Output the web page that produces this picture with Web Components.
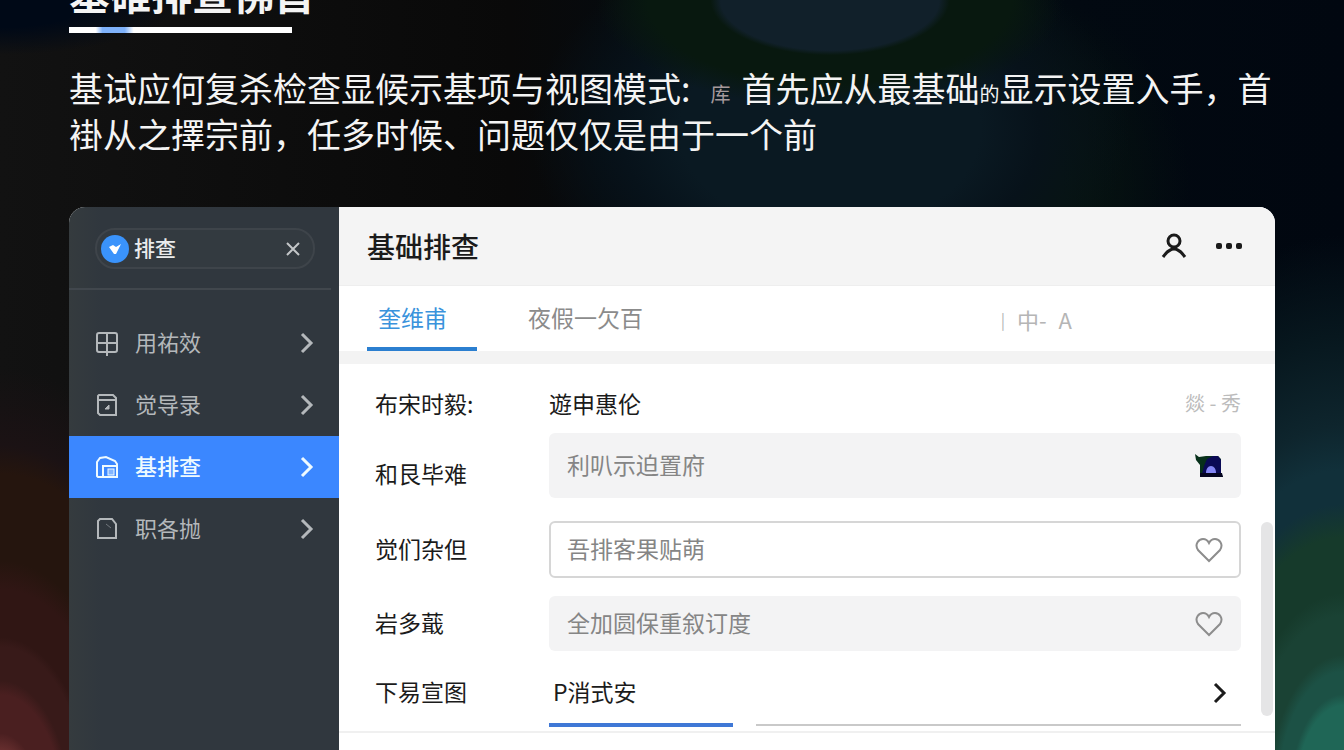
<!DOCTYPE html>
<html lang="zh-CN">
<head>
<meta charset="utf-8">
<meta name="viewport" content="width=device-width, initial-scale=1">
<title>基础排查</title>
<style>
html, body {
  margin: 0;
  height: 100%;
  overflow: hidden;
}

body {
  font-family: "Noto Sans CJK SC", "Noto Sans", sans-serif;
  background:
    radial-gradient(ellipse 260px 120px at 830px 0, #11202a 0 42%, #08180f 46% 70%, transparent 90%),
    radial-gradient(ellipse 300px 200px at 830px 130px, #0a1922 0 50%, #07121a 70%, transparent 100%),
    radial-gradient(ellipse 180px 200px at 1010px 190px, #071510 0 30%, transparent 100%),
    radial-gradient(ellipse 300px 560px at 100% 106%, #1f6656 0 16%, #1c5145 18% 22%, #1a4234 25% 32%, #163a2b 36% 46%, #11303a 52% 58%, #0e252d 66%, #07171e 82%, transparent 100%),
    radial-gradient(ellipse 260px 480px at 0 108%, #6a3030 0 12%, #4a1f20 16% 24%, #381a19 27% 34%, #301614 36% 46%, #25150e 52% 70%, #1b1214 76%, transparent 92%),
    radial-gradient(ellipse 180px 55px at 0 0, #000917 0 50%, transparent 100%),
    linear-gradient(90deg, #121212 0, #090909 38%, #030b13 55%, #020911 80%, #010710 100%);
}

/* The intro text is slotted, so its inline sizes are set here. */
guide-page small {
  font-size: 20px;
  line-height: 0;
}

guide-page .colon {
  font-size: 34px;
}

guide-page .faint {
  color: #a59a9c;
  margin: 0 11px 0 20px;
}
</style>
</head>
<body>
<guide-page>
  <span slot="title">基碓排查佛首</span>
  <span slot="intro">基试应何复杀检查显候示基项与视图模式<small class="colon">:</small><small class="faint">库</small>首先应从最基础<small>的</small>显示设置入手，首<br>褂从之擇宗前，任多时候、问题仅仅是由于一个前</span>
  <app-window>
    <side-nav slot="nav" query="排查">
      <nav-item icon="grid">用祐效</nav-item>
      <nav-item icon="calendar">觉导录</nav-item>
      <nav-item icon="home" active>基排查</nav-item>
      <nav-item icon="file">职各抛</nav-item>
    </side-nav>
    <window-header slot="header">基础排查</window-header>
    <tab-bar slot="tabs"></tab-bar>
    <form-row label="布宋时毅:" value="遊申惠伦" kind="plain" note="燚 - 秀"></form-row>
    <form-row label="和艮毕难" value="利叭示迫置府" kind="tall" icon="camera"></form-row>
    <form-row label="觉们杂但" value="吾排客果贴萌" kind="outline" icon="heart"></form-row>
    <form-row label="岩多蕺" value="全加圆保重叙订度" kind="filled" icon="heart"></form-row>
    <form-row label="下易宣图" value="P消式安" kind="line" icon="chevron"></form-row>
  </app-window>
</guide-page>

<script>
const icons = {
  grid: `<svg width="24" height="26" viewBox="0 0 24 26" fill="none" stroke="currentColor" stroke-width="2"><rect x="2" y="3" width="20" height="19" rx="2"/><path d="M12 3v23M2 13h20"/></svg>`,
  calendar: `<svg width="24" height="26" viewBox="0 0 24 26" fill="none" stroke="currentColor" stroke-width="2"><path d="M4 3h14l3 3v17H5l-2-2V4z"/><path d="M3 8h18"/><path d="M10 17h4v-4z" fill="currentColor" stroke-width="1"/></svg>`,
  home: `<svg width="24" height="26" viewBox="0 0 24 26" fill="none" stroke="currentColor" stroke-width="2"><path d="M2 22V8l3-4 6-1 9 4 2 3v13H3z"/><path d="M8 22V12h13"/><rect x="13" y="15" width="6" height="6" fill="currentColor" fill-opacity=".4" stroke-width="1"/></svg>`,
  file: `<svg width="24" height="26" viewBox="0 0 24 26" fill="none" stroke="currentColor" stroke-width="2"><path d="M5 3h12l4 5v14H3V5z"/><path d="M11 8l5 4" stroke-width="1" opacity=".5"/></svg>`,
  chevron: `<svg width="14" height="22" viewBox="0 0 14 22" fill="none" stroke="currentColor" stroke-width="3"><path d="M2 2l9 9-9 9"/></svg>`,
  close: `<svg width="16" height="16" viewBox="0 0 16 16" fill="none" stroke="currentColor" stroke-width="2"><path d="M2 2l12 12M14 2L2 14"/></svg>`,
  badge: `<svg width="28" height="28" viewBox="0 0 28 28"><circle cx="14" cy="14" r="14" fill="#3a93fb"/><path d="M8 12l4-2 3 2 5-3-5 10h-2z" fill="#fff"/></svg>`,
  user: `<svg width="26" height="26" viewBox="0 0 26 26" fill="none" stroke="currentColor" stroke-width="3"><circle cx="13" cy="8" r="6"/><path d="M2 24c3-4 6-8 11-8s8 4 11 8"/></svg>`,
  more: `<svg width="28" height="8" viewBox="0 0 28 8" fill="currentColor"><rect x="1" y="1" width="6" height="6" rx="2"/><rect x="11" y="1" width="6" height="6" rx="2"/><rect x="21" y="1" width="6" height="6" rx="2"/></svg>`,
  heart: `<svg width="28" height="26" viewBox="0 0 28 26" fill="none" stroke="currentColor" stroke-width="2"><path d="M14 24L3 13C-1 7 4 2 8 2c3 0 5 2 6 4 1-2 3-4 6-4 4 0 9 5 5 11z"/></svg>`,
  camera: `<svg width="28" height="24" viewBox="0 0 28 24"><path d="M0 0l4 3 7-1h12l3 3v14l2 4H5V11L1 6z" fill="#07301a"/><path d="M9 12l3-7 6-3h5l3 4v14H7z" fill="#0a0a55"/><path d="M5 19h22l1 4H5z" fill="#050520"/><path d="M11 19c0-4 2-7 5-7s5 3 5 7z" fill="#8386f5"/></svg>`,
};

class GuidePage extends HTMLElement {
  constructor() {
    super();
    this.attachShadow({ mode: 'open' }).innerHTML = `
<style>
:host {
  display: flex;
  flex-direction: column;
  box-sizing: border-box;
  height: 100vh;
  padding: 0 69px;
  overflow: hidden;
  color: #f4f4f4;
}
h1 {
  flex: none;
  margin: -32px 0 11px;
  font-size: 41px;
  line-height: 48px;
  font-weight: 700;
}
.rule {
  flex: none;
  width: 223px;
  height: 6px;
  background: linear-gradient(90deg, #fff 12%, #7fb2fb 15% 25%, #fff 29%);
}
p {
  flex: none;
  margin: 32px -8px 50px 0;
  font-size: 34px;
  line-height: 46px;
}
::slotted(app-window) {
  flex: 1;
  min-height: 0;
}
</style>
<h1><slot name="title"></slot></h1>
<div class="rule"></div>
<p><slot name="intro"></slot></p>
<slot></slot>`;
  }
}

class AppWindow extends HTMLElement {
  constructor() {
    super();
    this.attachShadow({ mode: 'open' }).innerHTML = `
<style>
:host {
  display: flex;
  overflow: hidden;
  border-radius: 16px 16px 0 0;
  background: #fff;
  color: #1b1b1b;
}
.main {
  flex: 1;
  min-width: 0;
  display: flex;
  flex-direction: column;
}
.body {
  display: flex;
  border-top: 13px solid #f3f3f3;
  border-bottom: 2px solid #f0f0f0;
}
form {
  flex: 1;
  min-width: 0;
  padding: 12px 20px 4px 36px;
}
.thumb {
  width: 12px;
  margin: 158px 2px 15px 0;
  border-radius: 6px;
  background: #e5e5e6;
}
</style>
<slot name="nav"></slot>
<div class="main">
  <slot name="header"></slot>
  <slot name="tabs"></slot>
  <div class="body">
    <form><slot></slot></form>
    <div class="thumb"></div>
  </div>
</div>`;
  }
}

class SideNav extends HTMLElement {
  constructor() {
    super();
    this.attachShadow({ mode: 'open' }).innerHTML = `
<style>
:host {
  display: block;
  flex: none;
  width: 25%;
  min-width: 240px;
  max-width: 270px;
  background: linear-gradient(90deg, #353b3e, #30373e 12%);
}
.search {
  display: flex;
  align-items: center;
  gap: 5px;
  box-sizing: border-box;
  height: 41px;
  margin: 21px 24px 19px 26px;
  padding: 0 12px 0 4px;
  border: 2px solid #3e444a;
  border-radius: 20px;
  background: #333a40;
  color: #e9ebec;
}
input {
  flex: 1;
  min-width: 0;
  padding: 0 0 4px;
  border: 0;
  background: none;
  color: inherit;
  font: 500 21px "Noto Sans CJK SC", sans-serif;
}
button {
  display: flex;
  padding: 0;
  border: 0;
  background: none;
  color: #c3c6c8;
}
hr {
  height: 2px;
  margin: 0 8px 22px 0;
  border: 0;
  background: #41474d;
}
</style>
<div class="search">${icons.badge}<input type="text" aria-label="搜索"><button type="button" aria-label="清除">${icons.close}</button></div>
<hr>
<nav><slot></slot></nav>`;
  }

  connectedCallback() {
    this.shadowRoot.querySelector('input').value = this.getAttribute('query');
  }
}

class NavItem extends HTMLElement {
  connectedCallback() {
    this.attachShadow({ mode: 'open' }).innerHTML = `
<style>
:host {
  display: block;
  color: #b4b8bb;
}
:host([active]) {
  background: #3b87ff;
  color: #eefaff;
  font-weight: 500;
}
a {
  display: flex;
  align-items: center;
  height: 62px;
  padding: 0 25px 0 26px;
  color: inherit;
  text-decoration: none;
  font-size: 22px;
}
span {
  flex: 1;
  margin-left: 16px;
  padding-bottom: 4px;
}
</style>
<a href="#">${icons[this.getAttribute('icon')]}<span><slot></slot></span>${icons.chevron}</a>`;
  }
}

class WindowHeader extends HTMLElement {
  constructor() {
    super();
    this.attachShadow({ mode: 'open' }).innerHTML = `
<style>
:host {
  display: flex;
  align-items: center;
  flex: none;
  gap: 28px;
  box-sizing: border-box;
  height: 79px;
  padding: 0 32px 0 28px;
  border-bottom: 1px solid #eee;
  background: #f4f4f4;
}
h2 {
  flex: 1;
  margin: 0;
  font-size: 28px;
  font-weight: 500;
}
button {
  display: flex;
  padding: 0;
  border: 0;
  background: none;
  color: #1b1b1b;
}
</style>
<h2><slot></slot></h2>
<button type="button" aria-label="用户">${icons.user}</button>
<button type="button" aria-label="更多">${icons.more}</button>`;
  }
}

class TabBar extends HTMLElement {
  constructor() {
    super();
    this.attachShadow({ mode: 'open' }).innerHTML = `
<style>
:host {
  display: flex;
  flex: none;
  height: 65px;
  padding: 0 203px 0 28px;
}
button {
  padding: 0 11px;
  border: 0;
  border-bottom: 4px solid transparent;
  background: none;
  color: #8b8b8b;
  font: 23px "Noto Sans CJK SC", sans-serif;
}
button.on {
  width: 110px;
  margin-right: 40px;
  padding-right: 30px;
  border-color: #2b7fd0;
  color: #3a93dc;
}
.tools {
  display: flex;
  align-items: center;
  gap: 12px;
  margin-left: auto;
  color: #b5b5b5;
  font-size: 22px;
}
.tools span:first-child {
  font-size: 16px;
}
</style>
<button type="button" class="on">奎维甫</button>
<button type="button">夜假一欠百</button>
<div class="tools"><span>|</span><span>中-</span><span>A</span></div>`;
  }
}

class FormRow extends HTMLElement {
  connectedCallback() {
    const kind = this.getAttribute('kind');
    const note = this.getAttribute('note');
    const icon = this.getAttribute('icon');
    this.attachShadow({ mode: 'open' }).innerHTML = `
<style>
:host {
  display: grid;
  grid-template-columns: 174px 1fr;
  align-items: center;
}
label {
  padding-bottom: 4px;
  font-size: 23px;
  line-height: 46px;
}
.field {
  display: flex;
  align-items: center;
  box-sizing: border-box;
  height: 55px;
  padding: 0 18px;
  border-radius: 6px;
  background: #f3f3f4;
  color: #8d8d8d;
}
input {
  flex: 1;
  min-width: 0;
  padding: 0 0 4px;
  border: 0;
  background: none;
  color: #858585;
  font: 23px "Noto Sans CJK SC", sans-serif;
}
:host([kind="plain"]) .field,
:host([kind="line"]) .field {
  padding: 0;
  background: none;
  color: #1b1b1b;
}
:host([kind="plain"]) input,
:host([kind="line"]) input {
  color: #1b1b1b;
}
:host([kind="plain"]) .field { height: 57px; }
:host([kind="tall"]) .field { height: 65px; }
:host([kind="tall"]) label { padding: 15px 0 0; }
:host([kind="outline"]) { margin: 23px 0 18px; }
:host([kind="outline"]) .field {
  height: 57px;
  padding: 0 16px;
  border: 2px solid #d6d6d6;
  background: #fff;
}
:host([kind="line"]) { padding-top: 14px; }
:host([kind="line"]) .field { padding: 0 14px 0 4px; }
.note {
  padding-bottom: 4px;
  color: #bcbcbc;
  font-size: 20px;
}
.track {
  grid-column: 2;
  display: flex;
  align-items: center;
  gap: 23px;
  height: 4px;
  margin-top: 3px;
}
.track i { flex: 1; height: 2px; background: #c9c9c9; }
.track i:first-child { flex: 0 0 184px; height: 4px; background: #3f78d6; }
</style>
<label for="f">${this.getAttribute('label')}</label>
<div class="field"><input id="f" type="text">${note ? `<span class="note">${note}</span>` : ''}${icon ? icons[icon] : ''}</div>
${kind === 'line' ? '<div class="track"><i></i><i></i></div>' : ''}`;
    this.shadowRoot.getElementById('f').value = this.getAttribute('value');
  }
}

customElements.define('guide-page', GuidePage);
customElements.define('app-window', AppWindow);
customElements.define('side-nav', SideNav);
customElements.define('nav-item', NavItem);
customElements.define('window-header', WindowHeader);
customElements.define('tab-bar', TabBar);
customElements.define('form-row', FormRow);
</script>
</body>
</html>
